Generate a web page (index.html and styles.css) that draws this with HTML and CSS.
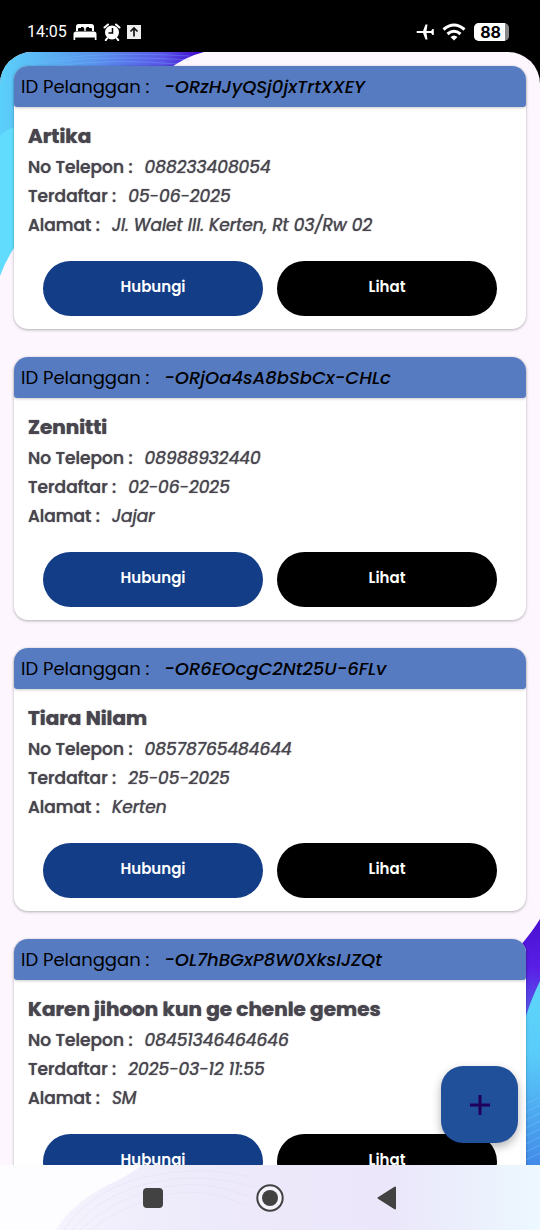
FILE: index.html
```html
<!DOCTYPE html>
<html lang="id">
<head>
<meta charset="utf-8">
<meta name="viewport" content="width=device-width, initial-scale=1">
<title>Pelanggan</title>
<link rel="stylesheet" href="styles.css">
</head>
<body>
<div class="phone">
  <header class="status">
    <div class="status-group">
      <span class="clock">14:05</span>
      <svg width="24" height="18" viewBox="0 0 24 18" fill="#fff"><path d="M3 8V3.500Q3 1 5.500 1H18.500Q21 1 21 3.500V8H19V6Q19 5 18 5H16V4H13.500V5Q12.700 5 12.700 6V8H11.300V6Q11.300 5 10.500 5V4H8V5H6Q5 5 5 6V8Z"/><path d="M0.500 17V11Q0.500 8.500 3 8.500H21Q23.500 8.500 23.500 11V17H21.800V14.500H2.200V17Z"/></svg>
      <svg width="18" height="18" viewBox="0 0 18 18"><circle cx="9" cy="9.500" r="7" fill="#fff"/><path d="M1.500 4.500L5 1.500M16.500 4.500L13 1.500M4 15.500L2.800 17.200M14 15.500L15.200 17.200" stroke="#fff" stroke-width="2" stroke-linecap="round"/><path d="M9.500 5V10H5.500" fill="none" stroke="#000" stroke-width="1.500"/></svg>
      <svg width="14" height="14" viewBox="0 0 14 14"><path d="M0 0H14V14H0Z" fill="#eee"/><path d="M7 11.500V3.500M3.500 6.500L7 3L10.500 6.500" fill="none" stroke="#111" stroke-width="1.700"/></svg>
    </div>
    <div class="status-group status-right">
      <svg width="18" height="16" viewBox="0 0 18 16" fill="#fff"><path d="M0.500 8Q0.500 7 1.500 7H7L9.500 0.500H11.500L10.500 7H15L16.500 5H17.800V11H16.500L15 9H10.500L11.500 15.500H9.500L7 9H1.500Q0.500 9 0.500 8Z"/></svg>
      <svg width="24" height="18" viewBox="0 0 24 18" fill="none" stroke="#fff" stroke-width="3"><path d="M1.500 6.500Q12-2.500 22.500 6.500"/><path d="M5.500 11Q12 5.500 18.500 11"/><path d="M8.500 14Q12 11 15.500 14L12 17.500Z" fill="#fff" stroke="none"/></svg>
      <span class="battery"><span class="battery-level">88</span></span>
    </div>
  </header>

  <div class="screen">
    <svg class="wave wave-top" width="210" height="226" viewBox="0 0 210 226" aria-hidden="true">
      <defs>
        <linearGradient id="topA" x1="0" x2="1"><stop offset="0" stop-color="#5bd0fb"/><stop offset=".45" stop-color="#5a95ec"/><stop offset=".8" stop-color="#5a55e8"/><stop offset="1" stop-color="#3f00cc"/></linearGradient>
      </defs>
      <path d="M0 0H204Q184 5 168 18H18V100H0Z" fill="url(#topA)"/>
      <path d="M18 74V190Q6 207 0 224V84Q6 77 18 74Z" fill="#62dcfd"/>
      <g fill="none" stroke="#7bc0ff" stroke-opacity=".3"><path d="M30 13Q90 2 190 8"/><path d="M40 9Q100-1 190 4"/><path d="M55 14Q110 6 178 12"/></g>
    </svg>
    <svg class="wave wave-bottom" width="20" height="246" viewBox="0 0 20 246" aria-hidden="true">
      <defs>
        <linearGradient id="botA" x1="0" y1="0" x2="0" y2="1"><stop offset="0" stop-color="#4a10d0"/><stop offset=".45" stop-color="#5a1fe6"/><stop offset="1" stop-color="#5570e8"/></linearGradient>
        <linearGradient id="botB" x1="0" y1="0" x2="0" y2="1"><stop offset="0" stop-color="#5dd6fa"/><stop offset=".4" stop-color="#5accf9"/><stop offset="1" stop-color="#428ae8"/></linearGradient>
      </defs>
      <path d="M20 0Q12 13 0 27V110L20 70Z" fill="url(#botA)"/>
      <path d="M20 62Q12 78 6 97V246H20Z" fill="url(#botB)"/>
      <path d="M6 185L20 178M6 193L20 186M6 201L20 194M6 209L20 202M6 217L20 210M6 225L20 218M6 233L20 226M6 241L20 234" stroke="#7dccff" stroke-opacity=".4"/>
    </svg>

    <main class="list">
      <article class="card">
        <div class="card-id"><span>ID Pelanggan :</span><em>-ORzHJyQSj0jxTrtXXEY</em></div>
        <div class="card-body">
          <h2>Artika</h2>
          <dl>
            <div><dt>No Telepon :</dt><dd>088233408054</dd></div>
            <div><dt>Terdaftar :</dt><dd>05-06-2025</dd></div>
            <div><dt>Alamat :</dt><dd>Jl. Walet lll. Kerten, Rt 03/Rw 02</dd></div>
          </dl>
          <div class="actions"><button class="btn btn-call" type="button">Hubungi</button><button class="btn btn-view" type="button">Lihat</button></div>
        </div>
      </article>
      <article class="card">
        <div class="card-id"><span>ID Pelanggan :</span><em>-ORjOa4sA8bSbCx-CHLc</em></div>
        <div class="card-body">
          <h2>Zennitti</h2>
          <dl>
            <div><dt>No Telepon :</dt><dd>08988932440</dd></div>
            <div><dt>Terdaftar :</dt><dd>02-06-2025</dd></div>
            <div><dt>Alamat :</dt><dd>Jajar</dd></div>
          </dl>
          <div class="actions"><button class="btn btn-call" type="button">Hubungi</button><button class="btn btn-view" type="button">Lihat</button></div>
        </div>
      </article>
      <article class="card">
        <div class="card-id"><span>ID Pelanggan :</span><em>-OR6EOcgC2Nt25U-6FLv</em></div>
        <div class="card-body">
          <h2>Tiara Nilam</h2>
          <dl>
            <div><dt>No Telepon :</dt><dd>08578765484644</dd></div>
            <div><dt>Terdaftar :</dt><dd>25-05-2025</dd></div>
            <div><dt>Alamat :</dt><dd>Kerten</dd></div>
          </dl>
          <div class="actions"><button class="btn btn-call" type="button">Hubungi</button><button class="btn btn-view" type="button">Lihat</button></div>
        </div>
      </article>
      <article class="card">
        <div class="card-id"><span>ID Pelanggan :</span><em>-OL7hBGxP8W0XksIJZQt</em></div>
        <div class="card-body">
          <h2>Karen jihoon kun ge chenle gemes</h2>
          <dl>
            <div><dt>No Telepon :</dt><dd>08451346464646</dd></div>
            <div><dt>Terdaftar :</dt><dd>2025-03-12 11:55</dd></div>
            <div><dt>Alamat :</dt><dd>SM</dd></div>
          </dl>
          <div class="actions"><button class="btn btn-call" type="button">Hubungi</button><button class="btn btn-view" type="button">Lihat</button></div>
        </div>
      </article>
    </main>

    <button class="fab" type="button" aria-label="Tambah pelanggan">
      <svg width="20" height="20" viewBox="0 0 20 20"><path d="M10 0V20M0 10H20" stroke="#21005d" stroke-width="3"/></svg>
    </button>
  </div>

  <nav class="navbar">
    <svg class="nav-wave" viewBox="0 0 540 65" preserveAspectRatio="none" aria-hidden="true">
      <defs><linearGradient id="nav" x1="0" x2="1"><stop offset="0" stop-color="#f5f3fd"/><stop offset=".25" stop-color="#eeebfb"/><stop offset=".68" stop-color="#ebe6fa"/><stop offset=".85" stop-color="#ebeffc"/><stop offset="1" stop-color="#edf8ff"/></linearGradient></defs>
      <path d="M142 0Q130 10 108 20Q72 38 56 65H540V0Z" fill="url(#nav)"/>
      <g fill="none" stroke="#dedcf6" stroke-opacity=".4"><path d="M64 65Q90 25 145 12T250 12"/><path d="M72 65Q100 30 150 18T255 22"/><path d="M80 65Q110 36 155 24T250 32"/><path d="M90 65Q120 42 160 31T245 40"/></g>
    </svg>
    <button type="button" aria-label="Aplikasi terbaru"><svg width="20" height="20" viewBox="0 0 20 20"><rect width="20" height="20" rx="4" fill="#424242"/></svg></button>
    <button type="button" aria-label="Beranda"><svg width="28" height="28" viewBox="0 0 28 28"><circle cx="14" cy="14" r="12.700" fill="#f5f3fc" stroke="#424242" stroke-width="2"/><circle cx="14" cy="14" r="8" fill="#424242"/></svg></button>
    <button type="button" aria-label="Kembali"><svg width="20" height="24" viewBox="0 0 20 24"><path d="M18 1.500V22.500L1.500 12Z" fill="#424242" stroke="#424242" stroke-width="2" stroke-linejoin="round"/></svg></button>
  </nav>
</div>
</body>
</html>
```
FILE: styles.css
```css
* {
  box-sizing: border-box;
}

body {
  margin: 0;
  background: #000;
  font-family: Poppins, Inter, "Open Sans", sans-serif;
  color: #49454f;
}

button {
  font: inherit;
  border: 0;
  padding: 0;
  background: none;
  cursor: pointer;
}

.phone {
  display: flex;
  flex-direction: column;
  height: 100vh;
}

.status {
  display: flex;
  flex: none;
  align-items: center;
  justify-content: space-between;
  padding: 20px 31px 8px 27px;
  height: 52px;
  color: #fff;
}

.status-group {
  display: flex;
  align-items: center;
  gap: 6px;
}

.status-right {
  gap: 8px;
}

.clock {
  font: 400 16px/24px Roboto, sans-serif;
}

.battery {
  display: flex;
  border-radius: 5px;
  background: #888;
  padding-right: 4px;
  overflow: hidden;
}

.battery-level {
  padding: 0 4px 0 6px;
  background: #fff;
  color: #000;
  font: 700 16px/18px Inter, sans-serif;
}

.screen {
  position: relative;
  flex: 1;
  min-height: 0;
  border-radius: 32px 32px 0 0;
  background: #fdf6fe;
  overflow: hidden;
}

.wave {
  position: absolute;
}

.wave-top {
  top: 0;
  left: 0;
}

.wave-bottom {
  right: 0;
  bottom: 0;
}

.list {
  position: relative;
  display: flex;
  flex-direction: column;
  gap: 28px;
  height: 100%;
  padding: 14px;
  overflow: hidden auto;
  scrollbar-width: none;
}

.card {
  flex: none;
  border-radius: 14px;
  background: #fff;
  box-shadow: 0 1px 3px rgba(0, 0, 0, 0.3);
}

.card-id {
  display: flex;
  gap: 15px;
  padding: 0 7px;
  border-radius: 14px 14px 3px 3px;
  background: #577bc0;
  box-shadow: 0 1px 3px rgba(0, 0, 0, 0.2);
  color: #000;
  font-size: 18px;
  line-height: 41px;
}

.card-id em {
  font-weight: 500;
}

.card-body {
  padding: 13px 14px;
}

h2 {
  margin: 0;
  font-size: 20px;
  font-weight: 700;
  line-height: 32px;
  text-shadow: 0 0 1px currentColor;
}

dl {
  margin: 1px 0 21px;
  font-size: 17px;
  line-height: 29px;
}

dl div {
  display: flex;
  gap: 12px;
  text-shadow: 0 0 1px currentColor;
}

dt {
  font-weight: 500;
}

dd {
  margin: 0;
  font-style: italic;
}

.actions {
  display: flex;
  gap: 14px;
  padding: 0 15px;
}

.btn {
  flex: 1;
  height: 55px;
  padding-bottom: 4px;
  border-radius: 28px;
  color: #fff;
  font-size: 15px;
  font-weight: 600;
}

.btn-call {
  background: #133d87;
}

.btn-view {
  background: #000;
}

.fab {
  position: absolute;
  right: 22px;
  bottom: 22px;
  display: grid;
  place-items: center;
  width: 77px;
  height: 77px;
  border-radius: 22px;
  background: #205099;
  box-shadow: 0 4px 10px rgba(0, 0, 0, 0.3);
}

.navbar {
  position: relative;
  display: flex;
  flex: none;
  align-items: center;
  justify-content: center;
  gap: 89px;
  height: 65px;
  background: #fdfdff;
}

.navbar button {
  position: relative;
  display: grid;
  place-items: center;
  width: 28px;
  height: 28px;
}

.nav-wave {
  position: absolute;
  inset: 0;
  width: 100%;
  height: 100%;
}
```
